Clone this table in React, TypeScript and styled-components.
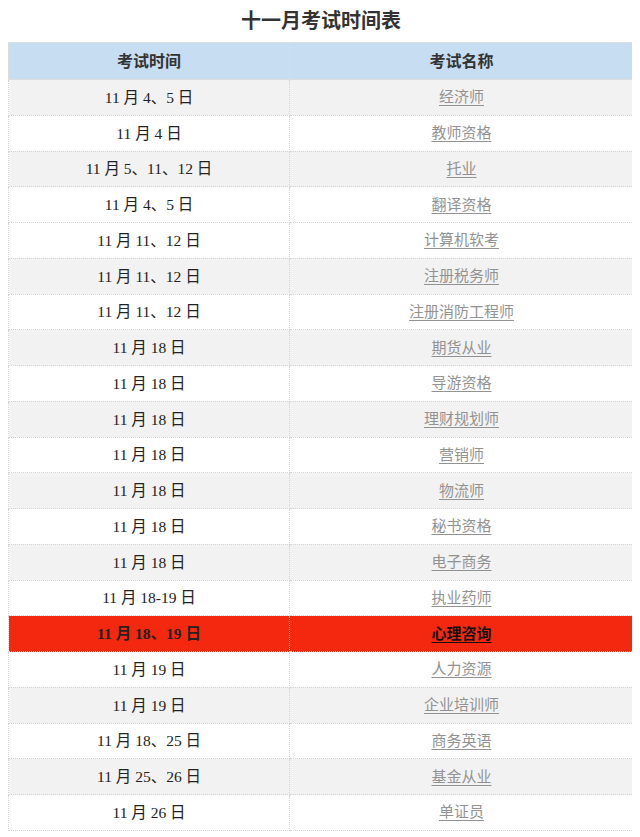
import styled, { createGlobalStyle } from "styled-components";

const GlobalStyle = createGlobalStyle`
  body {
    margin: 8px 8px 0;
    background: #fff;
    font-family: "Liberation Serif", "Noto Sans CJK SC", serif;
  }
`;

const Page = styled.div`
  width: 626px;
  position: relative;
`;

const Title = styled.h1`
  margin: 0 0 7px;
  height: 27px;
  line-height: 24px;
  text-align: center;
  font-family: "Noto Sans CJK SC", sans-serif;
  font-size: 20px;
  font-weight: 700;
  color: #333;
`;

const Table = styled.table`
  width: 626px;
  border-collapse: collapse;
  table-layout: fixed;
`;

const HeadCell = styled.th`
  height: 34px;
  padding: 0 0 2px;
  background: #c6ddf2;
  border: 1px solid #dcdcdc;
  font-family: "Noto Sans CJK SC", sans-serif;
  font-size: 16px;
  font-weight: 700;
  color: #333;
  text-align: center;
`;

interface IRow {
  striped: boolean;
  hot: boolean;
}

const Row = styled.tr<IRow>`
  height: 35.75px;
  background: ${(p) => (p.hot ? "#f4280f" : p.striped ? "#f2f2f2" : "#fff")};
  font-weight: ${(p) => (p.hot ? 700 : 400)};
`;

const DateCell = styled.td`
  padding: 0 0 3px;
  border: 1px dotted #d4d4d4;
  text-align: center;
  font-family: "Liberation Serif", "Noto Sans CJK SC", serif;
  font-size: 15.5px;
  color: #222;
`;

const NameCell = styled.td`
  padding: 0 0 3px;
  border: 1px dotted #d4d4d4;
  text-align: center;
`;

const ExamLink = styled.a<{ hot: boolean }>`
  font-family: "Noto Sans CJK SC", sans-serif;
  font-size: 15px;
  color: ${(p) => (p.hot ? "#111" : "#929292")};
  text-decoration: underline;
  text-underline-offset: 3px;
`;

// stray text cursor sitting just right of the table, under the red row
const Caret = styled.div`
  position: absolute;
  z-index: 2;
  left: 627px;
  top: 643px;
  width: 3px;
  height: 18px;
  background: #2a2a2a;
`;

const exams: [string, string][] = [
  ["11 月 4、5 日", "经济师"],
  ["11 月 4 日", "教师资格"],
  ["11 月 5、11、12 日", "托业"],
  ["11 月 4、5 日", "翻译资格"],
  ["11 月 11、12 日", "计算机软考"],
  ["11 月 11、12 日", "注册税务师"],
  ["11 月 11、12 日", "注册消防工程师"],
  ["11 月 18 日", "期货从业"],
  ["11 月 18 日", "导游资格"],
  ["11 月 18 日", "理财规划师"],
  ["11 月 18 日", "营销师"],
  ["11 月 18 日", "物流师"],
  ["11 月 18 日", "秘书资格"],
  ["11 月 18 日", "电子商务"],
  ["11 月 18-19 日", "执业药师"],
  ["11 月 18、19 日", "心理咨询"],
  ["11 月 19 日", "人力资源"],
  ["11 月 19 日", "企业培训师"],
  ["11 月 18、25 日", "商务英语"],
  ["11 月 25、26 日", "基金从业"],
  ["11 月 26 日", "单证员"],
];

// the source table loses its rhythm after row 4
const isStriped = (i: number) => (i < 4 ? i % 2 === 0 : i % 2 === 1);

function App() {
  return (
    <Page>
      <GlobalStyle />
      <Title>十一月考试时间表</Title>
      <Table>
        <colgroup>
          <col style={{ width: 281 }} />
          <col />
        </colgroup>
        <thead>
          <tr>
            <HeadCell>考试时间</HeadCell>
            <HeadCell>考试名称</HeadCell>
          </tr>
        </thead>
        <tbody>
          {exams.map(([date, name], i) => {
            const hot = name === "心理咨询";
            return (
              <Row key={name} striped={isStriped(i)} hot={hot}>
                <DateCell>{date}</DateCell>
                <NameCell>
                  <ExamLink hot={hot} href="#">
                    {name}
                  </ExamLink>
                </NameCell>
              </Row>
            );
          })}
        </tbody>
      </Table>
      <Caret />
    </Page>
  );
}

export default App;
